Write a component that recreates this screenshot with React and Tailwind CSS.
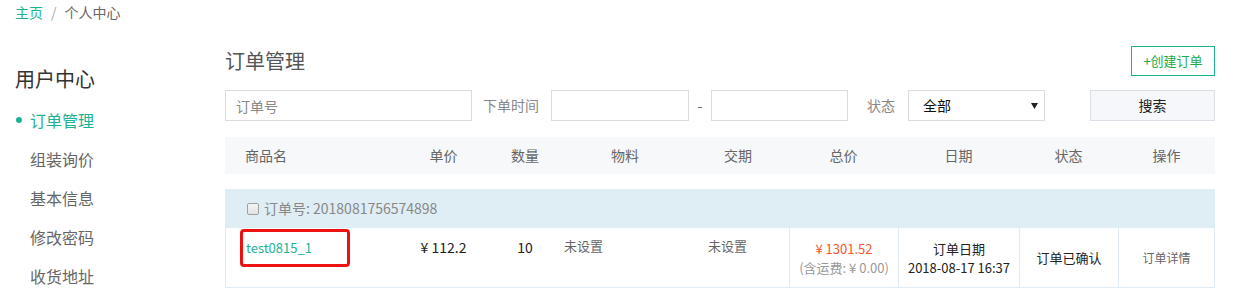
const menu = ["订单管理", "组装询价", "基本信息", "修改密码", "收货地址"];

const columns = [
  { title: "商品名", align: "pl-[20px] text-left" },
  { title: "单价" },
  { title: "数量" },
  { title: "物料" },
  { title: "交期" },
  { title: "总价" },
  { title: "日期" },
  { title: "状态" },
  { title: "操作" },
];

const grid =
  "grid grid-cols-[175px_87px_76px_124px_102px_109px_121px_99px_97px]";

function Sidebar() {
  return (
    <div className="w-[225px] shrink-0 pl-[15px] pt-[19px]">
      <div className="text-[20px] leading-[28px] text-[#333]">用户中心</div>
      <ul className="mt-[7px]">
        {menu.map((m, i) => (
          <li
            key={m}
            className={`relative flex h-[39px] items-center pl-[15px] text-[16px] ${
              i === 0 ? "text-[#1ab394]" : "text-[#666]"
            }`}
          >
            {i === 0 && (
              <span className="absolute left-[1px] top-[17px] h-[6px] w-[6px] rounded-full bg-[#1ab394]" />
            )}
            {m}
          </li>
        ))}
      </ul>
    </div>
  );
}

function Filters() {
  return (
    <div className="mt-[14px] flex h-[31px] items-center text-[14px]">
      <input
        placeholder="订单号"
        className="h-[31px] w-[247px] border border-[#dcdcdc] px-[10px] text-[14px] text-[#333] outline-none placeholder:text-[#888]"
      />
      <span className="ml-[11px] text-[#888]">下单时间</span>
      <input className="ml-[12px] h-[31px] w-[138px] border border-[#dcdcdc] outline-none" />
      <span className="w-[22px] text-center text-[#666]">-</span>
      <input className="h-[31px] w-[137px] border border-[#dcdcdc] outline-none" />
      <span className="ml-[19px] text-[#888]">状态</span>
      <div className="ml-[13px] flex h-[31px] w-[137px] items-center justify-between border border-[#dcdcdc] pl-[14px] pr-[6px] text-[#111]">
        <span>全部</span>
        <svg width="7" height="6" viewBox="0 0 7 6">
          <path d="M0 0h7L3.5 6z" fill="#222" />
        </svg>
      </div>
      <button className="ml-auto h-[31px] w-[125px] border border-[#dcdfe6] bg-[#f5f7fa] text-[14px] text-[#222]">
        搜索
      </button>
    </div>
  );
}

function OrderGroup() {
  return (
    <div className="mt-[15px]">
      <div className="flex h-[39px] items-center bg-[#dfedf4] pl-[22px] text-[14px] text-[#888]">
        <span className="mr-[5px] h-[12px] w-[12px] rounded-[2px] border border-[#a0a0a0] bg-gradient-to-b from-[#f4f4f4] to-[#e2e2e2]" />
        订单号: 2018081756574898
      </div>
      <div className={`${grid} h-[60px] border-b border-[#dfecf3] text-[14px] leading-5`}>
        <div className="relative border-l border-[#dfecf3] pl-[20px] pt-[10px] text-[13px] text-[#1ab394]">
          test0815_1
          <span className="absolute left-[14px] top-[1px] h-[38px] w-[110px] rounded-[4px] border-[3px] border-[#ee1111]" />
        </div>
        <div className="pt-[9px] text-center text-[#222]">¥ 112.2</div>
        <div className="pt-[9px] text-center text-[#222]">10</div>
        <div className="pl-[1px] pt-[8px] text-[13px] text-[#666]">未设置</div>
        <div className="pl-[21px] pt-[8px] text-[13px] text-[#666]">未设置</div>
        <div className="flex flex-col items-center justify-center border-l border-[#dfecf3] text-[13px] leading-[19px]">
          <span className="text-[#f8562d]">¥ 1301.52</span>
          <span className="text-[#999]">(含运费: ¥ 0.00)</span>
        </div>
        <div className="flex flex-col items-center justify-center border-l border-[#dfecf3] text-[13px] leading-[19px] text-[#222]">
          <span>订单日期</span>
          <span>2018-08-17 16:37</span>
        </div>
        <div className="flex items-center justify-center border-l border-[#dfecf3] text-[13px] text-[#222]">
          订单已确认
        </div>
        <div className="flex items-center justify-center border-x border-[#dfecf3] text-[12px] text-[#666]">
          订单详情
        </div>
      </div>
    </div>
  );
}

export default function App() {
  return (
    <div className="h-[305px] w-[1236px] overflow-hidden bg-white font-['Noto_Sans_CJK_SC',sans-serif] text-[#333]">
      {/* BREADCRUMB */}
      <div className="h-[46px] pl-[15px] pt-[2px] text-[14px] leading-5">
        <span className="text-[#1ab394]">主页</span>
        <span className="mx-[8px] text-[#aaa]">/</span>
        <span className="text-[#666]">个人中心</span>
      </div>

      <div className="flex">
        <Sidebar />

        <div className="w-[990px]">
          {/* TITLE */}
          <div className="flex h-[30px] items-center justify-between">
            <h1 className="text-[20px] leading-[28px] text-[#555]">订单管理</h1>
            <button className="h-[30px] w-[84px] border border-[#1ab394] text-[13px] text-[#22aa44]">
              +创建订单
            </button>
          </div>

          <Filters />

          {/* TABLE HEAD */}
          <div className={`${grid} mt-[16px] h-[37px] items-center bg-[#f6f8fa] text-[14px] text-[#666]`}>
            {columns.map((c) => (
              <div key={c.title} className={c.align || "text-center"}>
                {c.title}
              </div>
            ))}
          </div>

          <OrderGroup />
        </div>
      </div>
    </div>
  );
}
